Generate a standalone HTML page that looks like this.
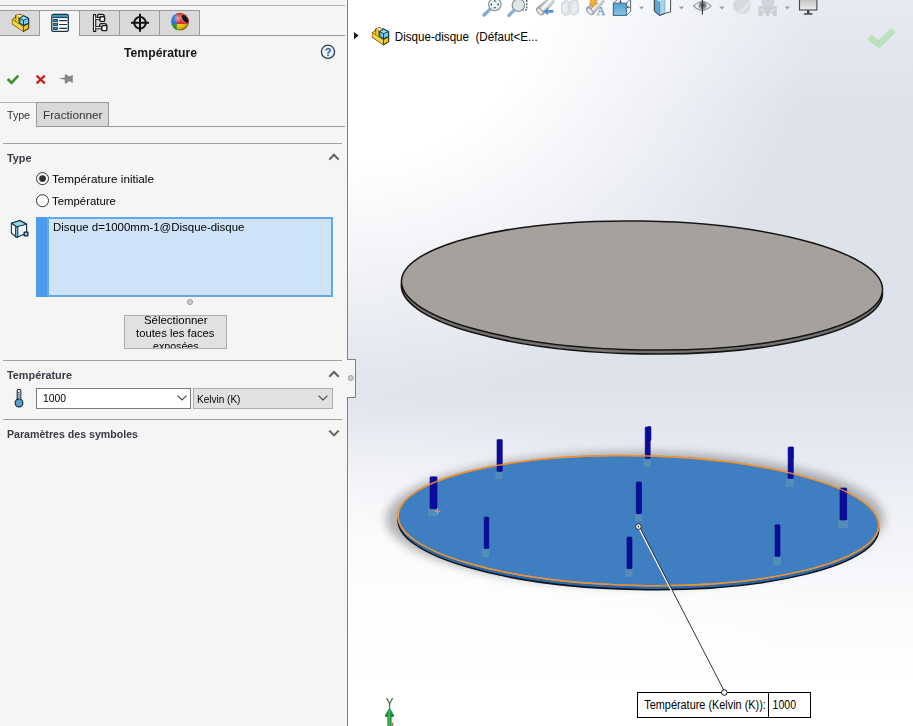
<!DOCTYPE html>
<html><head><meta charset="utf-8"><title>Température</title>
<style>
html,body{margin:0;padding:0;}
body{width:913px;height:726px;overflow:hidden;position:relative;background:#fff;font-family:"Liberation Sans",sans-serif;font-size:11.5px;color:#000;}
.abs{position:absolute;}
#vp{position:absolute;left:348px;top:0;width:565px;height:726px;overflow:hidden;
 background:
  radial-gradient(ellipse 470px 410px at 0px 0px,#ffffff 0%,#ffffff 40%,rgba(255,255,255,0.55) 68%,rgba(255,255,255,0) 100%),
  radial-gradient(ellipse 520px 330px at 0px 100%,rgba(255,255,255,0.85) 0%,rgba(255,255,255,0.7) 55%,rgba(255,255,255,0) 100%),
  linear-gradient(to bottom,#e7eaf1 0px,#dee2eb 110px,#dee2eb 380px,#e6e9f0 450px,#f1f3f7 530px,#fafbfc 610px,#ffffff 680px,#ffffff 726px);}
#panel{position:absolute;left:0;top:0;width:347px;height:726px;background:#f5f5f5;border-right:1px solid #7f7f7f;}
.t{position:absolute;white-space:nowrap;line-height:14px;}
.b{font-weight:bold;color:#3a3a44;}
.hl{position:absolute;height:1px;background:#a0a0a0;}
</style></head><body>
<div id="vp">
<svg class="abs" style="left:0;top:0" width="565" height="726" viewBox="348 0 565 726">
 <defs>
  <filter id="blur6" x="-20%" y="-50%" width="140%" height="200%"><feGaussianBlur stdDeviation="5"/></filter>
 </defs>
 <!-- top disk -->
 <g transform="rotate(1 642 285.5)">
  <ellipse cx="642" cy="289.5" rx="240.6" ry="64.4" fill="#757370" stroke="#141414" stroke-width="1.6"/>
  <ellipse cx="642" cy="285.5" rx="240.6" ry="64.4" fill="#a5a29e" stroke="#141414" stroke-width="1.5"/>
 </g>
 <!-- bottom disk -->
 <ellipse cx="635" cy="519" rx="249" ry="67" fill="#505050" opacity="0.42" filter="url(#blur6)"/>
 <g transform="rotate(1.15 638.4 520.6)">
  <ellipse cx="638.4" cy="524.6" rx="240.4" ry="64.9" fill="#2d68a8" stroke="#0a1522" stroke-width="1.5"/>
  <ellipse cx="638.4" cy="520.6" rx="240.4" ry="64.9" fill="#3f7fc1" stroke="#e8923a" stroke-width="1.5"/>
 </g>
 <!-- viewport toolbar -->
 <g id="vtb">
  <defs>
   <linearGradient id="gblue" x1="0" y1="0" x2="0" y2="1"><stop offset="0" stop-color="#4f9fd0"/><stop offset="1" stop-color="#8cc4e2"/></linearGradient>
   <linearGradient id="gblue2" x1="0" y1="0" x2="1" y2="0"><stop offset="0" stop-color="#3f97cc"/><stop offset="1" stop-color="#b5daee"/></linearGradient>
   <linearGradient id="gfl1" gradientUnits="userSpaceOnUse" x1="542.6" y1="2.4" x2="549" y2="8.6"><stop offset="0" stop-color="#8f969d"/><stop offset="0.45" stop-color="#ffffff"/><stop offset="1" stop-color="#aab0b6"/></linearGradient>
   <linearGradient id="gfl2" gradientUnits="userSpaceOnUse" x1="592.6" y1="2.2" x2="599" y2="8.4"><stop offset="0" stop-color="#8f969d"/><stop offset="0.45" stop-color="#ffffff"/><stop offset="1" stop-color="#aab0b6"/></linearGradient>
   <linearGradient id="gmon" x1="0" y1="0" x2="0" y2="1"><stop offset="0" stop-color="#bdbdbd"/><stop offset="1" stop-color="#ececec"/></linearGradient>
  </defs>
  <!-- zoom to fit -->
  <path d="M489.6,9.6 L484,15" stroke="#7dacd0" stroke-width="3.4" stroke-linecap="round"/>
  <circle cx="494.8" cy="4.4" r="6.2" fill="#edf2f5" stroke="#9099a2" stroke-width="1.3"/>
  <path d="M494.8,0 l1.5,1.6 h-3z M494.8,8.8 l1.5,-1.6 h-3z M490.4,4.4 l1.6,-1.5 v3z M499.2,4.4 l-1.6,-1.5 v3z" fill="#333"/>
  <!-- zoom area -->
  <path d="M526.8,0 V10 H522.5" stroke="#222" stroke-width="1" stroke-dasharray="2 1.2" fill="none"/>
  <path d="M513.6,10.6 L509,15.4" stroke="#86b2d3" stroke-width="3.4" stroke-linecap="round"/>
  <circle cx="518.4" cy="5.2" r="6.2" fill="#dfe6ea" stroke="#9099a2" stroke-width="1.3"/>
  <!-- previous view -->
  <path d="M536.4,8.2 L546.5,0 L550,-2 L554.5,1.5 L551,5.5 L543.4,14.6 Z" fill="url(#gfl1)" stroke="#a3a9af" stroke-width="0.7"/>
  <ellipse cx="539.9" cy="11.4" rx="2.4" ry="4.3" transform="rotate(-42 539.9 11.4)" fill="#c9cdd1" stroke="#8d949b" stroke-width="0.9"/>
  <ellipse cx="539.9" cy="11.4" rx="1.2" ry="2.8" transform="rotate(-42 539.9 11.4)" fill="#eef0f2"/>
  <path d="M543.2,11.4 L548.2,7.6 V10 H553.4 V12.8 H548.2 V15.2 Z" fill="#5590c6"/>
  <!-- section view (disabled) -->
  <path d="M561.5,3.2 L566,0 L569,1.6 L569,14.6 L564.4,15.6 L561.5,13 Z" fill="#dfe2e6" stroke="#cdd1d6" stroke-width="0.8"/>
  <path d="M570,1.6 L574.5,-0.5 L578.4,1.6 L578.4,12.6 L573.6,15.4 L570,13.6 Z" fill="#e2e5e9" stroke="#cdd1d6" stroke-width="0.8"/>
  <path d="M563,5 L567,3 V12 L563,13Z M572,4 L576.4,3 V11 L572,12.6Z" fill="#eceef1" opacity="0.9"/>
  <!-- dynamic annotation views -->
  <path d="M586.4,8 L596.5,0 L600,-2 L604.5,1.5 L601,5.5 L593.4,14.4 Z" fill="url(#gfl2)" stroke="#a3a9af" stroke-width="0.7"/>
  <ellipse cx="589.9" cy="11.2" rx="2.4" ry="4.3" transform="rotate(-42 589.9 11.2)" fill="#c9cdd1" stroke="#8d949b" stroke-width="0.9"/>
  <ellipse cx="589.9" cy="11.2" rx="1.2" ry="2.8" transform="rotate(-42 589.9 11.2)" fill="#eef0f2"/>
  <path d="M590.5,-1 H597.5 L594.4,2.8 H598 L591,9 L593,4.6 H590 Z" fill="#f5b62e" stroke="#c8861c" stroke-width="0.6"/>
  <text x="600.8" y="15.4" font-family="Liberation Serif, serif" font-size="11.5" text-anchor="middle" fill="#6595c0" stroke="#6595c0" stroke-width="0.25">A</text>
  <!-- view orientation -->
  <path d="M613.4,3.2 L618,-1 H630.6 V11.4 L626.4,15.4 H613.4 Z" fill="#fdfdfd" stroke="#5a6670" stroke-width="1"/>
  <rect x="613.4" y="3.2" width="13" height="12.2" fill="url(#gblue)" stroke="#3a6f92" stroke-width="1"/>
  <path d="M626.4,3.2 L630.6,-1" stroke="#5a6670" stroke-width="1"/>
  <path d="M620.5,0 v3 M619.4,1.6 l1.1,1.4 l1.1,-1.4 M627,7.2 h3.2 M628.4,6 l-1.4,1.2 l1.4,1.2" stroke="#333" stroke-width="0.8" fill="none"/>
  <path d="M639.2,6.4 H644 L641.6,9.6 Z" fill="#969ca4"/>
  <!-- display style -->
  <path d="M654.4,-1 V11.2 L659.6,15.3 L665,13.4 L670.6,11.8 V-1 Z" fill="#f6f9fb" stroke="#4a4f55" stroke-width="1"/>
  <path d="M654.4,-1 V11.2 L659.6,15.3 V1.6 L656,-1 Z" fill="#5fa9d3"/>
  <path d="M659.6,1.6 V15.3 L665,13.4 V-1 H661 Z" fill="#a6d3ea"/>
  <path d="M654.4,-1 V11.2 L659.6,15.3 L665,13.4" fill="none" stroke="#3f4750" stroke-width="1"/>
  <path d="M659.6,1.6 V15.3" stroke="#3d7fa8" stroke-width="0.8"/>
  <path d="M665,0 V13.4" stroke="#8aa9bb" stroke-width="0.7"/>
  <path d="M679,6.4 H684 L681.5,9.6 Z" fill="#969ca4"/>
  <!-- hide/show -->
  <path d="M693.6,6 Q702.4,-3 711,6 Q702.4,14.5 693.6,6 Z" fill="#eef0f3" stroke="#9a9fa6" stroke-width="1.2"/>
  <circle cx="702.6" cy="5.2" r="4" fill="#8d9196"/>
  <circle cx="702.6" cy="5.2" r="2" fill="#5c6065"/>
  <path d="M702.4,0 V14.6" stroke="#2e3033" stroke-width="1.1"/>
  <path d="M719.2,6.4 H724.4 L721.8,9.6 Z" fill="#969ca4"/>
  <!-- edit appearance (disabled) -->
  <circle cx="742" cy="5.4" r="8.8" fill="#d0d4da" opacity="0.8"/>
  <path d="M738,12 L748,2 L750.5,4.5 L741,14.5 Z" fill="#e2e5ea" opacity="0.9"/>
  <!-- apply scene (disabled) -->
  <circle cx="768" cy="2.4" r="6.4" fill="#ced2d8" opacity="0.85"/>
  <rect x="758.4" y="6.2" width="18.4" height="9.8" fill="#c8ccd2" opacity="0.9"/>
  <path d="M760,8.6 L764.4,11.4 M775.2,8.6 L770.8,11.4" stroke="#e3e6eb" stroke-width="1.5"/>
  <rect x="762.6" y="13.2" width="3.2" height="2.8" fill="#eef0f4"/>
  <rect x="769.6" y="13.2" width="3.2" height="2.8" fill="#eef0f4"/>
  <path d="M784.8,6.4 H790 L787.4,9.6 Z" fill="#9da2a9"/>
  <!-- view settings monitor -->
  <rect x="799.5" y="-2" width="17.4" height="12" fill="url(#gmon)" stroke="#484848" stroke-width="1.1"/>
  <rect x="807" y="10.4" width="2.4" height="3" fill="#3c3c3c"/>
  <rect x="804" y="13.2" width="8.4" height="1.5" fill="#3c3c3c"/>
 </g>
 <!-- rods -->
 <g id="rods">
  <rect x="428.0" y="509.0" width="10.0" height="7.0" fill="#6a9cb4" opacity="0.5"/>
  <rect x="430.0" y="476.8" width="7.0" height="32.0" rx="0.8" fill="#0b0ba0" stroke="#06066e" stroke-width="0.6"/>
  <rect x="495.5" y="472.0" width="7.0" height="7.0" fill="#6a9cb4" opacity="0.5"/>
  <rect x="497.0" y="439.6" width="5.3" height="31.8" rx="0.8" fill="#0b0ba0" stroke="#06066e" stroke-width="0.6"/>
  <rect x="482.5" y="549.0" width="6.5" height="8.0" fill="#6a9cb4" opacity="0.5"/>
  <rect x="484.2" y="517.0" width="4.6" height="31.5" rx="0.8" fill="#0b0ba0" stroke="#06066e" stroke-width="0.6"/>
  <rect x="643.5" y="459.0" width="7.5" height="8.0" fill="#6a9cb4" opacity="0.5"/>
  <rect x="645.2" y="427.0" width="5.0" height="31.6" rx="0.8" fill="#0b0ba0" stroke="#06066e" stroke-width="0.6"/>
  <rect x="635.0" y="514.0" width="7.0" height="7.0" fill="#6a9cb4" opacity="0.5"/>
  <rect x="636.3" y="482.0" width="5.2" height="31.7" rx="0.8" fill="#0b0ba0" stroke="#06066e" stroke-width="0.6"/>
  <rect x="625.5" y="569.0" width="7.0" height="8.0" fill="#6a9cb4" opacity="0.5"/>
  <rect x="627.0" y="537.0" width="5.0" height="31.7" rx="0.8" fill="#0b0ba0" stroke="#06066e" stroke-width="0.6"/>
  <rect x="786.0" y="479.0" width="8.0" height="8.0" fill="#6a9cb4" opacity="0.5"/>
  <rect x="788.1" y="447.0" width="5.2" height="31.5" rx="0.8" fill="#0b0ba0" stroke="#06066e" stroke-width="0.6"/>
  <rect x="838.0" y="520.0" width="10.0" height="8.0" fill="#6a9cb4" opacity="0.5"/>
  <rect x="840.0" y="488.0" width="6.7" height="32.0" rx="0.8" fill="#0b0ba0" stroke="#06066e" stroke-width="0.6"/>
  <rect x="773.0" y="557.0" width="8.0" height="8.0" fill="#6a9cb4" opacity="0.5"/>
  <rect x="775.0" y="524.8" width="5.0" height="31.6" rx="0.8" fill="#0b0ba0" stroke="#06066e" stroke-width="0.6"/>
  <rect x="647.6" y="426.6" width="3.4" height="14" rx="0.8" fill="#0b0ba0" stroke="#06066e" stroke-width="0.5"/>
  <rect x="790.6" y="446.8" width="3" height="12" rx="0.8" fill="#0b0ba0"/>
  <path d="M434.5,511.2 H440.5 M437.5,508.4 V514.2" stroke="#f0a050" stroke-width="1"/>
 </g>
 <ellipse cx="638.4" cy="520.6" rx="240.4" ry="64.9" transform="rotate(1.15 638.4 520.6)" fill="none" stroke="#e8923a" stroke-width="1.5" opacity="0.9"/>
 <!-- leader -->
 <path d="M638.4,526.6 L724.3,692.5" stroke="#ffffff" stroke-width="1.6" fill="none"/>
 <path d="M639.4,526.6 L725,692.5" stroke="#1a1a1a" stroke-width="0.9" fill="none"/>
 <circle cx="638.4" cy="526.6" r="2.8" fill="#fff" stroke="#222" stroke-width="1"/>
 <circle cx="638.4" cy="526.6" r="0.9" fill="#222"/>
 <!-- callout -->
 <rect x="637.5" y="692.5" width="173" height="25" fill="#fff" stroke="#000" stroke-width="1"/>
 <path d="M768.5,692.5 V717.5" stroke="#000" stroke-width="1"/>
 <circle cx="724.3" cy="692.5" r="2.8" fill="#fff" stroke="#111" stroke-width="1"/>
 <text id="c1" x="644.3" y="708.8" font-family="Liberation Sans, sans-serif" font-size="12" textLength="121.5" lengthAdjust="spacingAndGlyphs" fill="#000">Température (Kelvin (K)):</text>
 <text id="c2" x="772.6" y="708.8" font-family="Liberation Sans, sans-serif" font-size="12" textLength="23.4" lengthAdjust="spacingAndGlyphs" fill="#000">1000</text>
 <!-- flyout tab -->
 <path d="M347,359.5 H355.5 V397.5 H347" fill="#f5f5f5" stroke="#7f7f7f" stroke-width="1"/>
 <circle cx="350.8" cy="378" r="2.6" fill="#c9c9c9" stroke="#9a9a9a" stroke-width="0.8"/>
 <!-- green check -->
 <path d="M869.3,37.3 L879,44.3 L893.4,30.2" fill="none" stroke="#bbe0bb" stroke-width="6.4" stroke-linejoin="miter"/>
 <!-- tree item -->
 <path d="M354,32 L358.6,35.6 L354,39.2 Z" fill="#111"/>
 <text id="tree" x="394.8" y="40.6" font-family="Liberation Sans, sans-serif" font-size="12" textLength="143" lengthAdjust="spacingAndGlyphs" xml:space="preserve" fill="#000">Disque-disque  (Défaut&lt;E...</text>
 <g transform="translate(372,27)" stroke-linejoin="round">
   <path d="M0.4,5.8 L3.1,4.3 L3.8,1.9 L7.2,0.7 L11.4,2 L16.6,4.7 L16.6,14.6 L11.4,17.7 L0.4,10 Z" fill="#f6cf33" stroke="#3d2e00" stroke-width="1.1"/>
   <path d="M3.8,1.9 L7.2,0.7 L11.4,2 L8,4 Z" fill="#fbe88a" stroke="none"/>
   <path d="M0.4,5.8 L3.1,4.3 L7,7 L7,10.2 L11.4,12.8 L11.4,17.7 L0.4,10 Z" fill="#f8d640" stroke="none"/>
   <path d="M11.4,12.6 L16.6,9.6 L16.6,14.6 L11.4,17.7 Z" fill="#f4c522" stroke="#3d2e00" stroke-width="0.9"/>
   <path d="M0.4,5.8 L11.4,12.8 M3.8,1.9 L3.8,7.6 M6.6,3 L6.6,9" fill="none" stroke="#7a5c00" stroke-width="0.8"/>
   <path d="M7.7,4.7 L11.5,2.2 L16.6,4.7 L16.6,9.5 L11.5,11.9 L7.7,9.5 Z" fill="#7ccbea" stroke="#0c3d57" stroke-width="1.1"/>
   <path d="M7.7,4.7 L11.5,2.2 L16.6,4.7 L11.5,6.6 Z" fill="#9bdcf2" stroke="#0c3d57" stroke-width="0.9"/>
   <path d="M11.5,6.6 L11.5,11.9" fill="none" stroke="#0c3d57" stroke-width="1.1"/>
 </g>
 <!-- triad -->
 <text id="triY" x="389.5" y="708" font-family="Liberation Sans, sans-serif" font-size="15.5" text-anchor="middle" textLength="7.6" lengthAdjust="spacingAndGlyphs" fill="#1c5a2c">Y</text>
 <path d="M389.5,707.5 L394.2,715.5 L393.5,717 H391.6 V726 H387.4 V717 H385.4 L384.8,715.5 Z" fill="#1f8f3c"/>
 <path d="M389.3,710 V726" stroke="#4fc06a" stroke-width="1.2"/>
 <path d="M392,726 L393.2,722.5" stroke="#b03020" stroke-width="1"/>
</svg>
</div>
<div id="panel">
 <!-- top line and tab strip -->
 <div class="hl" style="left:0;top:5px;width:345px;background:#b4b4b4"></div>
 <div class="hl" style="left:0;top:35px;width:345px;background:#9a9a9a"></div>
 <div class="abs" style="left:-1px;top:10px;width:199px;height:24px;background:#d9d9d9;border:1px solid #9a9a9a;box-sizing:content-box"></div>
 <div class="abs" style="left:39px;top:10px;width:1px;height:25px;background:#9a9a9a"></div>
 <div class="abs" style="left:79px;top:10px;width:1px;height:25px;background:#9a9a9a"></div>
 <div class="abs" style="left:119px;top:10px;width:1px;height:25px;background:#9a9a9a"></div>
 <div class="abs" style="left:159px;top:10px;width:1px;height:25px;background:#9a9a9a"></div>
 <div class="abs" style="left:40px;top:11px;width:39px;height:26px;background:#f5f5f5"></div>

 <!-- title -->
 <div class="t b" id="title" style="transform-origin:0 0;transform:scaleX(1.0167);left:124px;top:46px;font-size:12px;color:#17171c">Température</div>
 <!-- sub tabs -->
 <div class="hl" style="left:36px;top:126px;width:309px;background:#9a9a9a"></div>
 <div class="abs" style="left:36px;top:102px;width:71px;height:23px;background:#d9d9d9;border:1px solid #9a9a9a;box-sizing:content-box"></div>
 <div class="abs" style="left:0;top:102px;width:36px;height:1px;background:#b4b4b4"></div>
 <div class="t" id="t_type" style="transform-origin:0 0;transform:scaleX(0.9237);left:7px;top:108px;color:#333">Type</div>
 <div class="t" id="t_frac" style="transform-origin:0 0;transform:scaleX(1.0223);left:43px;top:108px;color:#333">Fractionner</div>
 <!-- section Type -->
 <div class="hl" style="left:3px;top:143px;width:339px"></div>
 <div class="t b" id="h_type" style="transform-origin:0 0;transform:scaleX(0.9423);left:7px;top:151px">Type</div>
 <div class="t" id="r1" style="transform-origin:0 0;transform:scaleX(1.0159);left:52px;top:172px">Température initiale</div>
 <div class="t" id="r2" style="transform-origin:0 0;transform:scaleX(0.9907);left:52px;top:194px">Température</div>
 <div class="abs" style="left:36px;top:217px;width:11px;height:80px;background:#4d9bef"></div>
 <div class="abs" style="left:47px;top:217px;width:282px;height:76px;background:#cfe3f8;border:2px solid #62aae6;box-sizing:content-box"></div>
 <div class="t" id="sel" style="transform-origin:0 0;transform:scaleX(0.9958);left:53px;top:220px">Disque d=1000mm-1@Disque-disque</div>
 <div class="abs" style="left:187px;top:299px;width:4px;height:4px;border-radius:50%;background:#d0d0d0;border:1px solid #999"></div>
 <!-- button -->
 <div class="abs" style="left:124px;top:315px;width:101px;height:32px;background:#e1e1e1;border:1px solid #adadad;box-sizing:content-box"></div>
 <div class="abs" style="left:125px;top:308px;width:101px;height:40px;overflow:hidden">
   <div class="t" id="b1" style="transform-origin:0 0;transform:scaleX(0.9937);left:18.5px;top:5px">Sélectionner</div>
   <div class="t" id="b2" style="transform-origin:0 0;transform:scaleX(0.9825);left:11px;top:18px">toutes les faces</div>
   <div class="t" id="b3" style="transform-origin:0 0;transform:scaleX(0.9248);left:28px;top:31px">exposées</div>
 </div>
 <!-- section Température -->
 <div class="hl" style="left:3px;top:360px;width:339px"></div>
 <div class="t b" id="h_temp" style="transform-origin:0 0;transform:scaleX(0.9448);left:7px;top:368px">Température</div>
 <div class="abs" style="left:36px;top:388px;width:153px;height:19px;background:#fff;border:1px solid #7a7a7a;box-sizing:content-box"></div>
 <div class="t" id="v1000" style="transform-origin:0 0;transform:scaleX(0.8984);left:43px;top:391px">1000</div>
 <div class="abs" style="left:193px;top:388px;width:138px;height:19px;background:#e1e1e1;border:1px solid #adadad;box-sizing:content-box"></div>
 <div class="t" id="kelvin" style="transform-origin:0 0;transform:scaleX(0.8717);left:197px;top:392px">Kelvin (K)</div>
 <div class="hl" style="left:3px;top:419px;width:339px"></div>
 <div class="t b" id="h_param" style="transform-origin:0 0;transform:scaleX(0.9232);left:7px;top:427px">Paramètres des symboles</div>

 <!-- panel icons -->
 <svg class="abs" style="left:0;top:0" width="347" height="726" viewBox="0 0 347 726">
  <!-- tab1: part icon -->
  <g id="ic_part" transform="translate(12,13.7)" stroke-linejoin="round">
   <path d="M0.4,5.8 L3.1,4.3 L3.8,1.9 L7.2,0.7 L11.4,2 L16.6,4.7 L16.6,14.6 L11.4,17.7 L0.4,10 Z" fill="#f6cf33" stroke="#3d2e00" stroke-width="1.1"/>
   <path d="M3.8,1.9 L7.2,0.7 L11.4,2 L8,4 Z" fill="#fbe88a" stroke="none"/>
   <path d="M0.4,5.8 L3.1,4.3 L7,7 L7,10.2 L11.4,12.8 L11.4,17.7 L0.4,10 Z" fill="#f8d640" stroke="none"/>
   <path d="M11.4,12.6 L16.6,9.6 L16.6,14.6 L11.4,17.7 Z" fill="#f4c522" stroke="#3d2e00" stroke-width="0.9"/>
   <path d="M0.4,5.8 L11.4,12.8 M3.8,1.9 L3.8,7.6 M6.6,3 L6.6,9" fill="none" stroke="#7a5c00" stroke-width="0.8"/>
   <path d="M7.7,4.7 L11.5,2.2 L16.6,4.7 L16.6,9.5 L11.5,11.9 L7.7,9.5 Z" fill="#7ccbea" stroke="#0c3d57" stroke-width="1.1"/>
   <path d="M7.7,4.7 L11.5,2.2 L16.6,4.7 L11.5,6.6 Z" fill="#9bdcf2" stroke="#0c3d57" stroke-width="0.9"/>
   <path d="M11.5,6.6 L11.5,11.9" fill="none" stroke="#0c3d57" stroke-width="1.1"/>
  </g>
  <!-- tab2: property manager -->
  <g id="ic_pm">
   <rect x="51.8" y="14.5" width="16.5" height="16.8" rx="1.4" fill="#ffffff" stroke="#0f3445" stroke-width="1.3"/>
   <rect x="52.4" y="15.1" width="15.3" height="2.2" fill="#3a93b2"/>
   <rect x="52.4" y="17.1" width="15.3" height="1" fill="#0f3445"/>
   <rect x="53.6" y="19.5" width="3.8" height="2.2" fill="#3a93b2" stroke="#0a3a46" stroke-width="0.9"/>
   <rect x="53.6" y="23.4" width="3.8" height="2.2" fill="#3a93b2" stroke="#0a3a46" stroke-width="0.9"/>
   <rect x="53.6" y="27.3" width="3.8" height="2.2" fill="#3a93b2" stroke="#0a3a46" stroke-width="0.9"/>
   <path d="M59.2,20.6 H67 M59.2,24.5 H67 M59.2,28.4 H67" stroke="#22303a" stroke-width="1.1"/>
  </g>
  <!-- tab3: configuration manager -->
  <g id="ic_cfg" stroke="#1c1c1c" stroke-linejoin="round">
   <rect x="93.5" y="14.6" width="2.2" height="16.8" fill="#fff" stroke-width="1.1"/>
   <path d="M95.7,17.4 H100 V19.6 H95.7 M95.7,26.6 H101.6 V28.8 H95.7" fill="#fff" stroke-width="1"/>
   <path d="M97.6,17.2 V15.6 Q97.6,14.4 99,14.4 H102.4 Q104.2,14.4 104.6,17" fill="none" stroke-width="1.2"/>
   <rect x="100" y="16.8" width="4.6" height="4.6" rx="0.8" fill="#fff" stroke-width="1.4"/>
   <path d="M99.6,26.4 V24.8 Q99.6,23.6 101,23.6 H104.8 Q106.6,23.6 107,26" fill="none" stroke-width="1.2"/>
   <rect x="101.8" y="25.6" width="5" height="5" rx="0.8" fill="#fff" stroke-width="1.4"/>
  </g>
  <!-- tab4: crosshair -->
  <g id="ic_cross" fill="none" stroke="#111" stroke-width="2">
   <circle cx="140" cy="22.8" r="5.8"/>
   <path d="M131,22.8 H149 M140,13.8 V31.8"/>
  </g>
  <!-- tab5: appearance ball -->
  <g id="ic_ball">
   <defs><clipPath id="ballc"><circle cx="180" cy="21.6" r="8.9"/></clipPath>
   <radialGradient id="ballsh" cx="38%" cy="32%" r="70%"><stop offset="0" stop-color="#fff" stop-opacity="0.6"/><stop offset="0.4" stop-color="#fff" stop-opacity="0"/><stop offset="0.8" stop-color="#000" stop-opacity="0.1"/><stop offset="1" stop-color="#000" stop-opacity="0.5"/></radialGradient></defs>
   <g clip-path="url(#ballc)">
    <rect x="170" y="12" width="7" height="12.4" fill="#2a72d8"/>
    <rect x="176.6" y="12" width="14" height="12.4" fill="#dc2a20"/>
    <rect x="176.6" y="24" width="14" height="8" fill="#f2c814"/>
    <rect x="170" y="24" width="6.8" height="8" fill="#2a9a34"/>
    <ellipse cx="184.8" cy="18.8" rx="3.2" ry="5.6" transform="rotate(-38 184.8 18.8)" fill="#e58a92"/>
    <ellipse cx="185" cy="18.8" rx="2.4" ry="4.8" transform="rotate(-38 185 18.8)" fill="#160c0a"/>
   </g>
   <circle cx="180" cy="21.6" r="8.9" fill="url(#ballsh)"/>
  </g>
  <!-- help -->
  <g id="ic_help">
   <circle cx="328" cy="51.8" r="6.6" fill="#eaf3fa" stroke="#2a3e52" stroke-width="1.3"/>
   <text x="328" y="56" font-family="Liberation Sans, sans-serif" font-weight="bold" font-size="11" text-anchor="middle" fill="#2a5a86">?</text>
  </g>
  <!-- ok / cancel / pin -->
  <path d="M7.6,79 L11.5,82.8 L18.3,75.6" fill="none" stroke="#3f8f2f" stroke-width="2.6"/>
  <path d="M36.6,75.6 L44.8,83.4 M44.8,75.6 L36.6,83.4" fill="none" stroke="#c8211a" stroke-width="2.2"/>
  <g fill="#858585">
   <path d="M58.5,78.6 L65,77.6 V79.8 Z"/>
   <path d="M64.8,74.6 H66.6 L69,76.6 L72.8,75 V83 L69,81 L66.6,83.4 H64.8 Z"/>
  </g>
  <!-- radios -->
  <circle cx="42.5" cy="178.6" r="6" fill="#fff" stroke="#333" stroke-width="1"/>
  <circle cx="42.5" cy="178.6" r="3.4" fill="#333"/>
  <circle cx="42.5" cy="200.7" r="6" fill="#fff" stroke="#333" stroke-width="1"/>
  <!-- chevrons -->
  <g fill="none" stroke="#606060" stroke-width="2">
   <path d="M329.3,159.6 L334,154.8 L338.7,159.6"/>
   <path d="M329.3,376.8 L334,372 L338.7,376.8"/>
   <path d="M329.3,430.6 L334,435.4 L338.7,430.6"/>
  </g>
  <g fill="none" stroke="#444" stroke-width="1.1">
   <path d="M177.5,395.6 L182,400 L186.5,395.6"/>
   <path d="M318.5,395.6 L323,400 L327.5,395.6"/>
  </g>
  <!-- face icon -->
  <g id="ic_face" stroke="#15303e" stroke-width="1.1" stroke-linejoin="round">
   <path d="M11.4,223.2 L20,220.4 L26.6,224.2 L26.6,233 L16.6,237.4 L11.4,233 Z" fill="#f4fafd"/>
   <path d="M11.4,223.2 L20,220.4 L26.6,224.2 L16.6,226.8 Z" fill="#9ad4ea"/>
   <path d="M15.6,227 H17.8 V237 H15.6 Z" fill="#8ccbe6" stroke="#0d4256"/>
   <rect x="24.2" y="232.2" width="3.6" height="3.6" fill="#9ad4ea" stroke="#0c2440" stroke-width="1.3"/>
  </g>
  <!-- thermometer -->
  <g id="ic_thermo">
   <path d="M17.2,400 V391 A1.8,1.8 0 0 1 20.8,391 V400" fill="#e8f2f8" stroke="#16283a" stroke-width="1.1"/>
   <circle cx="19" cy="403" r="3.9" fill="#5b9dc9" stroke="#16283a" stroke-width="1.1"/>
   <path d="M18,392.5 H19.2 M18,394.7 H19.2 M18,396.9 H19.2 M18,399.1 H19.2" stroke="#16283a" stroke-width="0.9"/>
   <rect x="19.3" y="391.5" width="1" height="9" fill="#5b9dc9"/>
  </g>
 </svg>
</div>
<div class="abs" style="left:347px;top:360px;width:1px;height:37px;background:#f5f5f5"></div>
</body></html>
